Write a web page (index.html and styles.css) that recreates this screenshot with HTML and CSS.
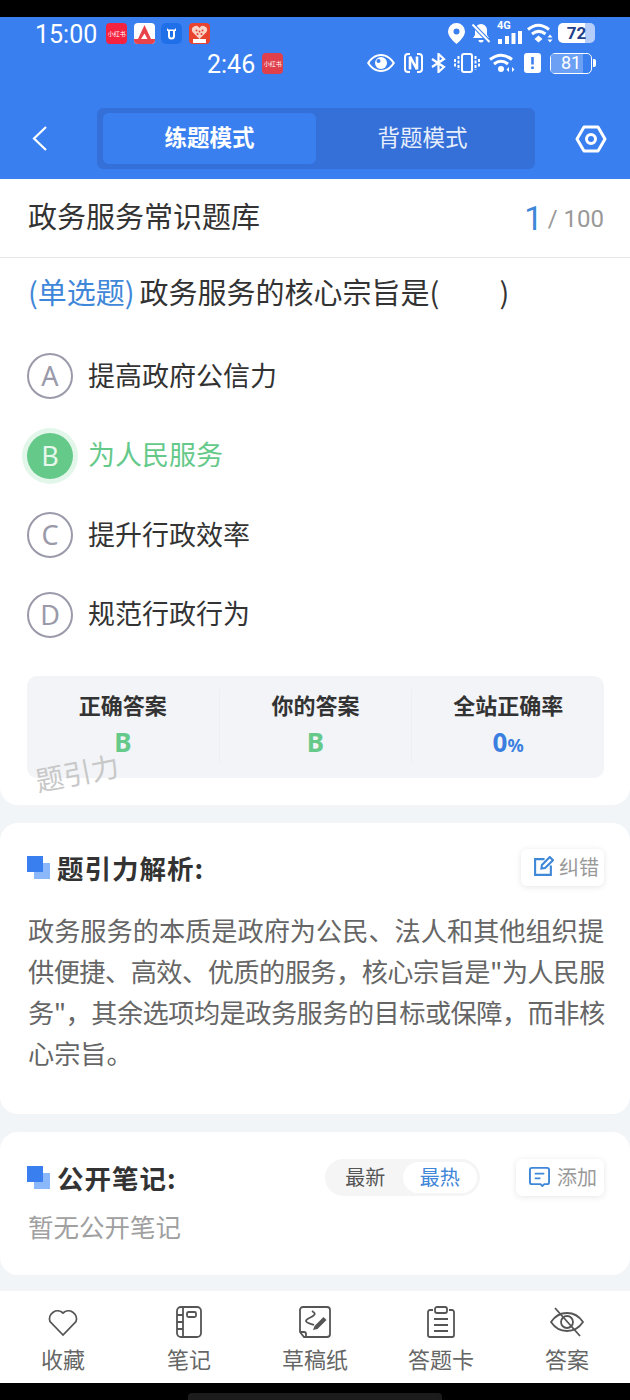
FILE: index.html
```html
<!DOCTYPE html>
<html lang="en">
<head>
    <meta charset="UTF-8">
    <meta name="viewport" content="width=device-width, initial-scale=1.0">
    <title>题引力 - 练题模式</title>
    <link rel="stylesheet" href="styles.css">
</head>
<body>
    <div id="app">
        <div class="top-black"></div>

        <header class="top-blue">
            <div class="status-row">
                <span class="clock">15:00</span>
                <div class="app-icons">
                    <span class="app-icon app-red">小红书</span>
                    <svg class="app-svg" viewBox="0 0 21 21"><rect width="21" height="21" rx="4" fill="#fff"/><path d="M0 16h21v1a4 4 0 0 1-4 4H4a4 4 0 0 1-4-4z" fill="#e8424a"/><path d="M10.500 2 17 16h-3.500l-3-5.500-3.500 5.500H4z" fill="#e8424a"/></svg>
                    <svg class="app-svg" viewBox="0 0 21 21"><rect width="21" height="21" rx="5" fill="#1f6fe8"/><path d="M6 5l1.500 1.500h6L15 5v3h-1v5a3.500 3.500 0 0 1-7 0V8H6zM9 8v5a1.500 1.500 0 0 0 3 0V8z" fill="#fff"/></svg>
                    <svg class="app-svg" viewBox="0 0 21 21"><rect width="21" height="21" rx="4" fill="#e8432f"/><path d="M10.500 16 3.500 9a3.800 3.800 0 0 1 7-4 3.800 3.800 0 0 1 7 4z" fill="#f8d3c8"/><circle cx="7.500" cy="7.500" r="1" fill="#e8432f"/><circle cx="13.500" cy="7.500" r="1" fill="#e8432f"/><circle cx="10.500" cy="8.500" r="1" fill="#e8432f"/><circle cx="8.500" cy="11" r="1" fill="#e8432f"/><circle cx="12.500" cy="11" r="1" fill="#e8432f"/><rect x="4" y="16" width="13" height="4" fill="#fff"/></svg>
                </div>
                <div class="status-icons first-icons">
                    <svg class="i-pin" viewBox="0 0 17 21"><path fill-rule="evenodd" d="M8.500 0A8.500 8.500 0 0 1 17 8.500C17 13 12 18 8.500 21 5 18 0 13 0 8.500A8.500 8.500 0 0 1 8.500 0zm0 5.500a3 3 0 1 0 0 6 3 3 0 0 0 0-6z" fill="#fff"/></svg>
                    <svg class="i-bell" viewBox="0 0 20 20"><path d="M10 1a6 6 0 0 1 6 6v5l2 3H2l2-3V7a6 6 0 0 1 6-6zM7.500 17h5a2.500 2.500 0 0 1-5 0z" fill="#fff"/><path d="M1.500 1.500 18.500 19" stroke="#3a7ff0" stroke-width="4"/><path d="M1.500 1.500 18.500 19" stroke="#fff" stroke-width="2"/></svg>
                    <div class="signal">
                        <span class="net-label">4G</span>
                        <svg class="i-bars" viewBox="0 0 24 13"><rect x="0" y="8" width="4" height="5" fill="#fff"/><rect x="7" y="5" width="4" height="8" fill="#fff"/><rect x="13.500" y="2" width="4" height="11" fill="#fff"/><rect x="20" y="0" width="4" height="13" fill="#fff"/></svg>
                    </div>
                    <svg class="i-wifi" viewBox="0 0 26 20"><g fill="none" stroke="#fff" stroke-width="3"><path d="M1 6.500C7.500 1 15 1 22 6.500"/><path d="M5 11c4.500-3.500 9-3.500 13.500 0"/></g><path d="M11.500 12.500l4 3.500-4 3.500-4-3.500z" fill="#fff"/><path d="M23 11.500l2.500 3h-5zM23 19.500l-2.500-3h5z" fill="#fff"/></svg>
                    <div class="batt-solid">
                        <span class="batt-solid-num">72</span>
                    </div>
                </div>
            </div>

            <div class="status-row second-row">
                <span class="clock">2:46</span>
                <span class="app-icon app-dim">小红书</span>
                <div class="status-icons second-icons">
                    <svg class="i-eye" viewBox="0 0 28 18"><path fill-rule="evenodd" d="M14 0c6 0 11 4 14 9-3 5-8 9-14 9S3 14 0 9c3-5 8-9 14-9zM14 2C9 2 5 5 2.500 9 5 13 9 16 14 16s9-3 11.500-7C23 5 19 2 14 2z" fill="#fff"/><circle cx="14" cy="9" r="6" fill="#fff"/><circle cx="11.500" cy="7" r="2" fill="#3a7ff0"/></svg>
                    <svg class="i-nfc" viewBox="0 0 19 20"><path d="M6 1H4a3 3 0 0 0-3 3v12a3 3 0 0 0 3 3h2M13 1h2a3 3 0 0 1 3 3v12a3 3 0 0 1-3 3h-2" fill="none" stroke="#fff" stroke-width="2"/><path d="M6 3.500v13M13 3.500v13M6 3.500l7 13" fill="none" stroke="#fff" stroke-width="2.600"/></svg>
                    <svg class="i-bt" viewBox="0 0 15 20"><path d="M1 6l12 8-5.500 5V1L13 6 1 14" fill="none" stroke="#fff" stroke-width="2.200"/></svg>
                    <svg class="i-vib" viewBox="0 0 26 20"><rect x="8" y="1" width="10" height="18" rx="2" fill="none" stroke="#fff" stroke-width="2"/><path d="M4.500 3v14M1 6v8M21.500 3v14M25 6v8" stroke="#fff" stroke-width="2" stroke-dasharray="3 1.500"/></svg>
                    <svg class="i-wifi2" viewBox="0 0 27 20"><g fill="none" stroke="#fff" stroke-width="3"><path d="M1 6.500C8 1 16 1 23 6.500"/><path d="M5 11c4.500-3.500 9.500-3.500 14 0"/></g><circle cx="12" cy="16" r="3" fill="#fff"/><path d="M20 14v5l-2.500-2.500zM23 14v5l2.500-2.500z" fill="#fff"/></svg>
                    <svg class="i-sim" viewBox="0 0 17 20"><path fill-rule="evenodd" d="M3 0h11a3 3 0 0 1 3 3v14a3 3 0 0 1-3 3H3a3 3 0 0 1-3-3V3a3 3 0 0 1 3-3zm4.200 4v7.500h2.600V4zm0 9.500V16h2.600v-2.500z" fill="#fff"/></svg>
                    <div class="batt-line">
                        <div class="batt-box">
                            <span class="batt-fill"></span>
                            <span class="batt-num">81</span>
                        </div>
                        <span class="batt-tip"></span>
                    </div>
                </div>
            </div>

            <div class="nav-row">
                <svg class="back-icon" viewBox="0 0 15 25"><path d="M14 1 2 12.500 14 24" fill="none" stroke="#fff" stroke-width="2.200"/></svg>
                <div class="mode-tabs">
                    <div class="mode-tab mode-active">练题模式</div>
                    <div class="mode-tab">背题模式</div>
                </div>
                <svg class="hex-icon" viewBox="0 0 32 28"><path d="M9 2h14l7 12-7 12H9L2 14z" fill="none" stroke="#fff" stroke-width="3" stroke-linejoin="round"/><circle cx="16" cy="14" r="4.500" fill="none" stroke="#fff" stroke-width="3"/></svg>
            </div>
        </header>

        <main class="content">
            <section class="card question-card">
                <div class="title-row">
                    <span class="bank-title">政务服务常识题库</span>
                    <span class="counter"><b class="counter-now">1</b><span class="counter-total">/ 100</span></span>
                </div>
                <div class="question"><span class="q-type">(单选题)</span>政务服务的核心宗旨是(<span class="blank"></span>)</div>

                <div class="options">
                    <div class="option">
                        <span class="opt-mark">A</span>
                        <span class="opt-text">提高政府公信力</span>
                    </div>
                    <div class="option option-right">
                        <span class="opt-mark">B</span>
                        <span class="opt-text">为人民服务</span>
                    </div>
                    <div class="option">
                        <span class="opt-mark">C</span>
                        <span class="opt-text">提升行政效率</span>
                    </div>
                    <div class="option">
                        <span class="opt-mark">D</span>
                        <span class="opt-text">规范行政行为</span>
                    </div>
                </div>

                <div class="stats">
                    <div class="stat">
                        <div class="stat-label">正确答案</div>
                        <div class="stat-value green">B</div>
                    </div>
                    <div class="stat">
                        <div class="stat-label">你的答案</div>
                        <div class="stat-value green">B</div>
                    </div>
                    <div class="stat">
                        <div class="stat-label">全站正确率</div>
                        <div class="stat-value blue">0<small>%</small></div>
                    </div>
                </div>
                <span class="watermark">题引力</span>
            </section>

            <section class="card analysis-card">
                <div class="card-head">
                    <span class="squares"></span>
                    <h2 class="card-title">题引力解析:</h2>
                    <button class="mini-btn">
                        <svg class="mini-icon" viewBox="0 0 20 20"><path d="M11 3H2v15h15V9" fill="none" stroke="#3f87d8" stroke-width="2"/><path d="M8 12l.500-3.500L16 1l3 3-7.500 7.500z" fill="none" stroke="#3f87d8" stroke-width="2"/></svg>
                        纠错
                    </button>
                </div>
                <p class="analysis-text">政务服务的本质是政府为公民、法人和其他组织提<span class="tight">供便捷、高效、优质的服务，核心宗旨是"为人民服务"，其余选项均是政务服务的目标或保障，而非核</span>心宗旨。</p>
            </section>

            <section class="card notes-card">
                <div class="card-head">
                    <span class="squares"></span>
                    <h2 class="card-title">公开笔记:</h2>
                    <div class="sort-switch">
                        <span class="sort-item">最新</span>
                        <span class="sort-item sort-active">最热</span>
                    </div>
                    <button class="mini-btn add-btn">
                        <svg class="mini-icon" viewBox="0 0 22 22"><path d="M3 2h16a2 2 0 0 1 2 2v13a2 2 0 0 1-2 2h-3l-2 2-2-2H3a2 2 0 0 1-2-2V4a2 2 0 0 1 2-2z" fill="none" stroke="#3f87d8" stroke-width="2"/><path d="M6 8h10M6 13h6" stroke="#3f87d8" stroke-width="2"/></svg>
                        添加
                    </button>
                </div>
                <div class="no-notes">暂无公开笔记</div>
            </section>
        </main>

        <nav class="bottom-nav">
            <div class="nav-item">
                <svg class="nav-icon" viewBox="0 0 34 34"><path d="M17 30 4 16.500A8 8 0 0 1 17 8a8 8 0 0 1 13 8.500z" fill="none" stroke="#555" stroke-width="1.800"/></svg>
                <span>收藏</span>
            </div>
            <div class="nav-item">
                <svg class="nav-icon" viewBox="0 0 34 34"><rect x="5" y="2" width="24" height="30" rx="4" fill="none" stroke="#555" stroke-width="1.800"/><path d="M11 2v30M5 10h6M5 17h6M5 24h6" stroke="#555" stroke-width="1.800"/><rect x="15" y="7" width="9" height="5" rx="1.500" fill="none" stroke="#555" stroke-width="1.800"/></svg>
                <span>笔记</span>
            </div>
            <div class="nav-item">
                <svg class="nav-icon" viewBox="0 0 34 34"><path d="M8 32H6l-4-5V5a3 3 0 0 1 3-3h24a3 3 0 0 1 3 3v24a3 3 0 0 1-3 3H8" fill="none" stroke="#555" stroke-width="1.800"/><path d="M2 27h4a2 2 0 0 1 2 2v3" fill="none" stroke="#555" stroke-width="1.800"/><path d="M14 6c3 2 4 3 1 5s-7 3-7 5 6 3 8 4" fill="none" stroke="#555" stroke-width="1.800"/><path d="M15 25l1.500-4 9-9 3 3-9 9z" fill="#555"/></svg>
                <span>草稿纸</span>
            </div>
            <div class="nav-item">
                <svg class="nav-icon" viewBox="0 0 34 34"><path d="M9 5H6a2 2 0 0 0-2 2v23a2 2 0 0 0 2 2h22a2 2 0 0 0 2-2V7a2 2 0 0 0-2-2h-3" fill="none" stroke="#555" stroke-width="1.800"/><rect x="11" y="2" width="12" height="6" rx="2" fill="none" stroke="#555" stroke-width="1.800"/><path d="M10 14h14M10 20h14M10 26h14" stroke="#555" stroke-width="1.800"/></svg>
                <span>答题卡</span>
            </div>
            <div class="nav-item">
                <svg class="nav-icon" viewBox="0 0 34 34"><path d="M1 17c8-12 24-12 32 0-8 12-24 12-32 0z" fill="none" stroke="#555" stroke-width="1.800"/><circle cx="17" cy="17" r="6" fill="none" stroke="#555" stroke-width="1.800"/><path d="M5 3l25 28" stroke="#555" stroke-width="1.800"/></svg>
                <span>答案</span>
            </div>
        </nav>

        <div class="bottom-black"><span class="home-pill"></span></div>
    </div>
</body>
</html>
```

FILE: styles.css
```css
* {
    box-sizing: border-box;
}

html, body {
    margin: 0;
    padding: 0;
}

body {
    font-family: "Noto Sans CJK SC", "Noto Sans", sans-serif;
    background-color: #f2f5f8;
    color: #333333;
    overflow: hidden;
}

#app {
    width: 630px;
    height: 1400px;
    display: flex;
    flex-direction: column;
}

.top-black {
    height: 17px;
    background-color: #000000;
}

/* Blue header */
.top-blue {
    height: 162px;
    background-color: #3a7ff0;
    color: #ffffff;
    display: flex;
    flex-direction: column;
}

.status-row {
    height: 30px;
    display: flex;
    align-items: center;
    padding: 2px 35px 0;
}

.second-row {
    padding-left: 207px;
    padding-right: 34px;
}

.clock {
    margin-top: 4px;
    font-family: Roboto, sans-serif;
    font-size: 25px;
    line-height: 30px;
}

.app-icons {
    display: flex;
    gap: 6.500px;
    margin-left: 9px;
}

.app-svg {
    width: 21px;
    height: 21px;
    display: block;
}

.app-icon {
    width: 21px;
    height: 21px;
    border-radius: 4px;
    font-size: 6px;
    line-height: 21px;
    white-space: nowrap;
    text-align: center;
    color: #ffffff;
}

.app-red {
    background-color: #f5233f;
}

.app-dim {
    background-color: #e0404b;
    margin-left: 7px;
}

.status-icons {
    margin-left: auto;
    display: flex;
    align-items: center;
}

.i-pin { width: 17px; height: 21px; }
.i-bell { width: 20px; height: 20px; margin-left: 6px; }
.i-wifi { width: 26px; height: 20px; margin-left: 5px; }

.signal {
    position: relative;
    width: 26px;
    height: 21px;
    margin-left: 5px;
}

.i-bars {
    position: absolute;
    left: 2px;
    bottom: 0;
    width: 24px;
    height: 13px;
}

.net-label {
    position: absolute;
    left: 1px;
    top: -3px;
    font-family: Roboto, sans-serif;
    font-size: 11px;
    font-weight: 700;
    line-height: 12px;
}

.batt-solid {
    width: 37px;
    height: 20px;
    margin-left: 5px;
    border-radius: 5px;
    background: linear-gradient(to right, #ffffff 0 72%, #b5cdfa 72% 100%);
    text-align: center;
    color: #23408a;
}

.batt-solid-num {
    font-family: Roboto, sans-serif;
    font-size: 17px;
    font-weight: 700;
    line-height: 20px;
    display: block;
}

.i-eye { width: 28px; height: 18px; }
.i-nfc { width: 19px; height: 20px; margin-left: 9px; }
.i-bt { width: 15px; height: 20px; margin-left: 8px; }
.i-vib { width: 26px; height: 20px; margin-left: 8px; }
.i-wifi2 { width: 27px; height: 20px; margin-left: 9px; }
.i-sim { width: 17px; height: 20px; margin-left: 8px; }

.batt-line {
    display: flex;
    align-items: center;
    margin-left: 9px;
}

.batt-box {
    position: relative;
    width: 42px;
    height: 21px;
    border: 1.5px solid #ffffff;
    border-radius: 5px;
    text-align: center;
}

.batt-fill {
    position: absolute;
    left: 0;
    top: 0;
    bottom: 0;
    width: 81%;
    border-radius: 3px 0 0 3px;
    background-color: #6ba0f5;
}

.batt-num {
    position: relative;
    font-family: Roboto, sans-serif;
    font-size: 18px;
    line-height: 18px;
    display: block;
}

.batt-tip {
    width: 3px;
    height: 8px;
    margin-left: 1px;
    border-radius: 0 2px 2px 0;
    background-color: #ffffff;
}

.nav-row {
    display: flex;
    align-items: center;
    padding: 0 23px 0 32px;
    margin-top: 31px;
}

.back-icon {
    width: 15px;
    height: 25px;
}

.mode-tabs {
    width: 438px;
    height: 61px;
    margin-left: 50px;
    padding: 5px 6px;
    display: flex;
    border-radius: 6px;
    background-color: #3570d9;
}

.mode-tab {
    flex: 1;
    padding-bottom: 5px;
    border-radius: 6px;
    font-size: 22.500px;
    line-height: 46px;
    text-align: center;
    color: #e6eefc;
}

.mode-active {
    background-color: #3a7ff0;
    color: #ffffff;
    font-weight: 700;
}

.hex-icon {
    width: 32px;
    height: 28px;
    margin-left: auto;
}

/* Cards */
.content {
    flex: 1;
    display: flex;
    flex-direction: column;
    gap: 18px;
}

.card {
    position: relative;
    background-color: #ffffff;
    border-radius: 18px;
}

.question-card {
    height: 626px;
    border-radius: 0 0 18px 18px;
}

.title-row {
    height: 79px;
    display: flex;
    align-items: center;
    justify-content: space-between;
    padding: 0 26px 6px 28px;
    border-bottom: 1px solid #e6e6e6;
}

.bank-title {
    font-size: 29px;
    color: #333333;
}

.counter {
    display: flex;
    align-items: center;
    gap: 5px;
    margin-top: 7px;
    font-family: Roboto, sans-serif;
    font-size: 24px;
    color: #999999;
}

.counter-now {
    font-size: 33px;
    font-weight: 400;
    color: #3f87d8;
}

.question {
    padding: 12px 28px 0;
    font-size: 29px;
    line-height: 43px;
    color: #333333;
    white-space: nowrap;
}

.q-type {
    color: #3f87d8;
    margin-right: 5px;
}

.blank {
    display: inline-block;
    width: 60px;
}

.options {
    margin-top: 40px;
    padding-left: 27px;
    display: flex;
    flex-direction: column;
    gap: 33.500px;
}

.option {
    height: 46px;
    display: flex;
    align-items: center;
    gap: 15px;
}

.opt-mark {
    width: 46px;
    height: 46px;
    border: 2px solid #9a9aaa;
    border-radius: 50%;
    font-family: "Noto Sans", sans-serif;
    font-size: 27px;
    line-height: 42px;
    text-align: center;
    color: #9a9aaa;
}

.opt-text {
    margin-top: -4px;
    font-size: 27px;
    color: #333333;
}

.option-right .opt-mark {
    border: none;
    line-height: 46px;
    background-color: #65c98a;
    color: #e6f7ec;
    box-shadow: 0 0 0 5px #e3f6ea;
}

.option-right .opt-text {
    color: #65c98a;
}

.stats {
    display: flex;
    height: 102px;
    margin: 38px 26px 0 27px;
    padding-top: 13px;
    border-radius: 10px;
    background-color: #f2f4f7;
}

.stat {
    flex: 1;
    height: 74px;
    text-align: center;
}

.stat + .stat {
    border-left: 1px solid #edeff2;
}

.stat-label {
    font-size: 22px;
    font-weight: 700;
    line-height: 30px;
    color: #333333;
}

.stat-value {
    margin-top: 5px;
    font-family: "Noto Sans", sans-serif;
    font-size: 26px;
    font-weight: 700;
    line-height: 36px;
}

.stat-value small {
    font-size: 18px;
}

.green { color: #65c98a; }
.blue { color: #3a7fe0; }

.watermark {
    position: absolute;
    left: 35px;
    top: 575px;
    font-size: 28px;
    line-height: 36px;
    color: #c8c8c8;
    transform: rotate(-11deg);
}

.card-head {
    position: relative;
    display: flex;
    align-items: center;
    padding: 0 26px 0 27px;
}

.squares {
    position: relative;
    width: 23px;
    height: 23px;
    margin-right: 7px;
}

.squares::before {
    content: "";
    position: absolute;
    right: 0;
    bottom: 0;
    width: 16px;
    height: 16px;
    background-color: #8ab8fb;
}

.squares::after {
    content: "";
    position: absolute;
    left: 0;
    top: 0;
    width: 16px;
    height: 16px;
    background-color: #3a7ff0;
}

.card-title {
    margin: 0;
    font-size: 26.500px;
    font-weight: 700;
    letter-spacing: 1px;
    color: #333333;
}

.mini-btn {
    width: 83px;
    height: 37px;
    margin-left: auto;
    padding: 0 0 2px 12px;
    display: flex;
    align-items: center;
    gap: 5px;
    border: none;
    border-radius: 6px;
    background-color: #ffffff;
    box-shadow: 0 1px 6px rgba(0, 0, 0, 0.1);
    font-family: inherit;
    font-size: 20px;
    color: #999999;
}

.add-btn {
    width: 88px;
    margin-left: 36px;
    padding-left: 13px;
    gap: 7px;
}

.mini-icon {
    width: 21px;
    height: 21px;
    flex-shrink: 0;
}

.analysis-card {
    height: 291px;
    padding-top: 25px;
}

.analysis-text {
    margin: 23px 23px 0 28px;
    font-size: 26.200px;
    line-height: 41px;
    color: #666666;
}

/* the middle lines of the reference are squeezed a little to fit the quote mark */
.tight {
    letter-spacing: -0.52px;
}

.notes-card {
    height: 143px;
    padding-top: 26px;
}

.sort-switch {
    height: 37px;
    margin-left: auto;
    padding: 3px;
    display: flex;
    border-radius: 19px;
    background-color: #f5f5f5;
}

.sort-item {
    width: 74.500px;
    border-radius: 16px;
    font-size: 20px;
    line-height: 29px;
    text-align: center;
    color: #555555;
}

.sort-active {
    background-color: #ffffff;
    color: #3f87d8;
}

.no-notes {
    margin: 11px 0 0 28px;
    font-size: 25.500px;
    line-height: 36px;
    color: #a0a0a0;
}

/* Bottom bar */
.bottom-nav {
    height: 92px;
    margin-top: 16px;
    display: flex;
    background-color: #ffffff;
}

.nav-item {
    flex: 1;
    display: flex;
    flex-direction: column;
    align-items: center;
    padding-top: 14px;
    font-size: 22px;
    line-height: 32px;
    color: #666666;
}

.nav-icon {
    width: 34px;
    height: 34px;
    margin-bottom: 3px;
}

.bottom-black {
    height: 17px;
    display: flex;
    justify-content: center;
    align-items: flex-end;
    background-color: #000000;
}

.home-pill {
    width: 254px;
    height: 7px;
    border-radius: 4px 4px 0 0;
    background-color: #1c1c1c;
}
```
